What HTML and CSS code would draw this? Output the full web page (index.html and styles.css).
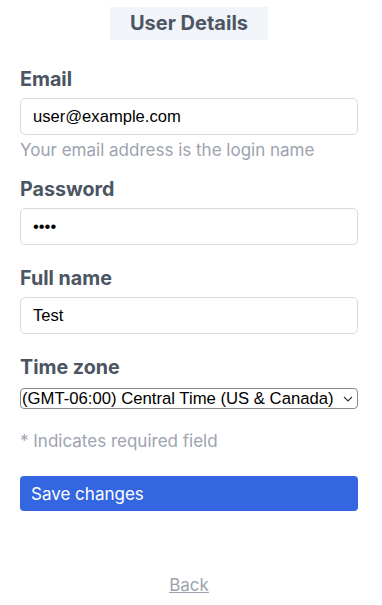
FILE: index.html
```html
<!DOCTYPE html>
<html>
<head>
<meta charset="utf-8">
<link rel="stylesheet" href="styles.css">
</head>
<body>
<div class="page">
  <div class="title-wrap"><h1 class="title">User Details</h1></div>
  <form class="form">
    <div class="field">
      <label class="label">Email</label>
      <input class="input" type="text" value="user@example.com">
      <div class="hint">Your email address is the login name</div>
    </div>
    <div class="field">
      <label class="label">Password</label>
      <input class="input" type="password" value="test">
    </div>
    <div class="field">
      <label class="label">Full name</label>
      <input class="input" type="text" value="Test">
    </div>
    <div class="field">
      <label class="label">Time zone</label>
      <div class="select-wrap">
        <select class="select"><option>(GMT-06:00) Central Time (US &amp; Canada)</option></select>
        <svg class="chev" width="10" height="6" viewBox="0 0 10 6"><path d="M1 1 L5 5 L9 1" fill="none" stroke="#333" stroke-width="1.1"/></svg>
      </div>
    </div>
    <div class="required">* Indicates required field</div>
    <button class="btn" type="button">Save changes</button>
  </form>
  <div class="back-wrap"><a class="back" href="#">Back</a></div>
</div>
</body>
</html>
```
FILE: styles.css
```css
html, body { margin: 0; padding: 0; background: #fff; }
body { font-family: Inter, "Liberation Sans", sans-serif; }
.page { padding: 7px 24px 0 20px; }
.title-wrap { display: flex; justify-content: center; }
.title {
  margin: 0;
  background: #f1f4f8;
  color: #4b5563;
  font-size: 20px;
  font-weight: 700;
  line-height: 33px;
  padding: 0 20px;
}
.form { display: flex; flex-direction: column; margin-top: 28px; }
.field { display: flex; flex-direction: column; margin-bottom: 22px; }
.label { color: #4b5563; font-weight: 700; font-size: 19.7px; line-height: 22px; margin-bottom: 8px; }
.input {
  box-sizing: border-box;
  height: 37px;
  border: 1px solid #d6d9de;
  border-radius: 5px;
  padding: 0 12px;
  font-family: "Liberation Sans", Arial, sans-serif;
  font-size: 16.6px;
  color: #000;
  margin: 0;
}
.hint { color: #9ca3af; font-size: 17px; line-height: 20px; margin-top: 5px; margin-bottom: -4px; }
.select-wrap { position: relative; display: flex; margin-top: 2px; }
.select {
  flex: 1;
  -webkit-appearance: none;
  appearance: none;
  box-sizing: border-box;
  height: 21px;
  border: 1px solid #8a8a8a;
  border-radius: 4px;
  background: #fff;
  color: #000;
  font-family: "Liberation Sans", Arial, sans-serif;
  font-size: 16.7px;
  line-height: 19px;
  margin: 0;
  padding: 0 0 0 1px;
}
.chev { position: absolute; right: 5px; top: 8px; pointer-events: none; }
.required { color: #9ca3af; font-size: 17px; line-height: 20px; margin-top: 0; }
.btn {
  margin-top: 25px;
  height: 35px;
  background: #3366e0;
  color: #fff;
  border: none;
  border-radius: 4px;
  text-align: left;
  padding: 0 11px;
  font-family: Inter, "Liberation Sans", sans-serif;
  font-size: 17px;
}
.back-wrap { text-align: center; margin-top: 64px; }
.back { color: #9ca3af; font-size: 17px; text-decoration: underline; }
```
